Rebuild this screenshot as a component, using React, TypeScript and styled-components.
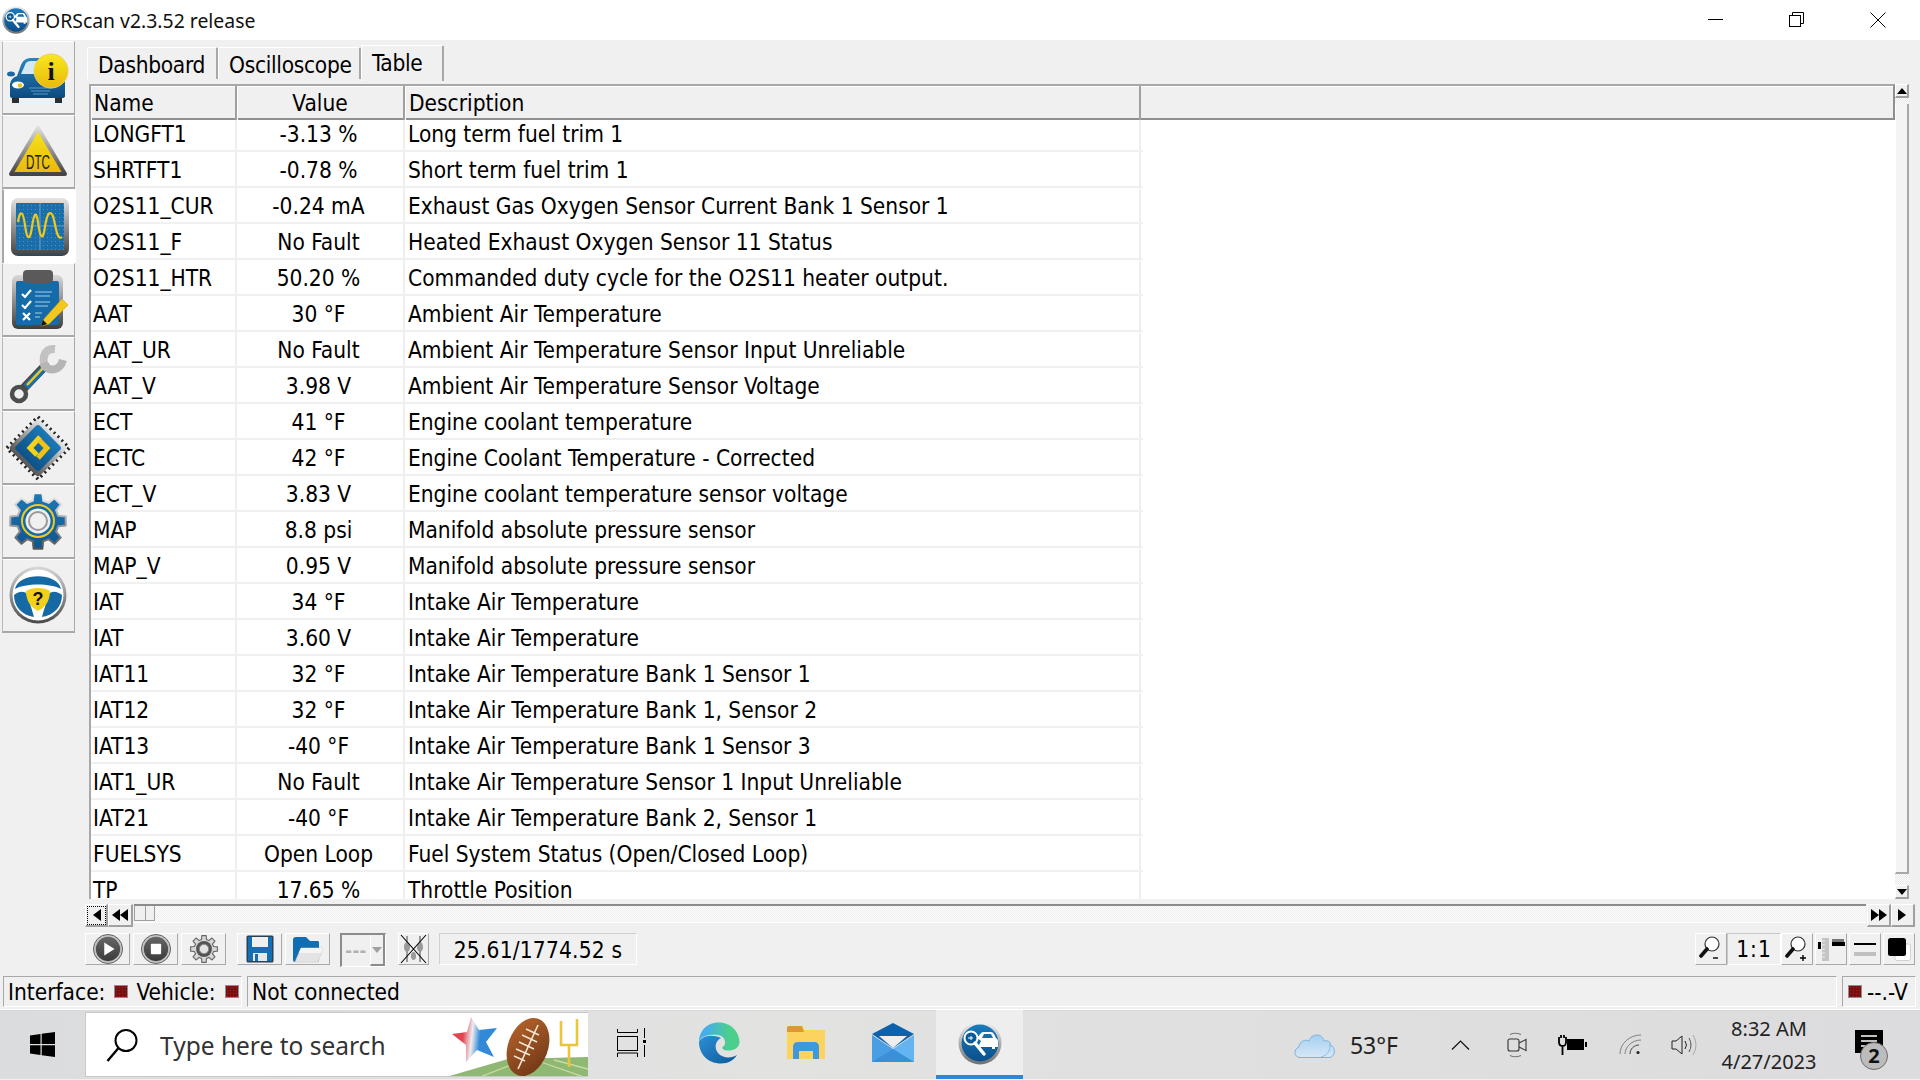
import React from 'react';
import styled, { createGlobalStyle } from 'styled-components';

const FONT = '"DejaVu Sans Condensed", "Noto Sans", "Liberation Sans", sans-serif';
const SYS = '"Noto Sans", "Open Sans", "Liberation Sans", sans-serif';

const Global = createGlobalStyle`
  html, body { margin: 0; padding: 0; background: #f0f0f0; }
  * { box-sizing: border-box; }
`;

const ROWS: [string, string, string][] = [
  ['LONGFT1', '-3.13 %', 'Long term fuel trim 1'],
  ['SHRTFT1', '-0.78 %', 'Short term fuel trim 1'],
  ['O2S11_CUR', '-0.24 mA', 'Exhaust Gas Oxygen Sensor Current Bank 1 Sensor 1'],
  ['O2S11_F', 'No Fault', 'Heated Exhaust Oxygen Sensor 11 Status'],
  ['O2S11_HTR', '50.20 %', 'Commanded duty cycle for the O2S11 heater output.'],
  ['AAT', '30 °F', 'Ambient Air Temperature'],
  ['AAT_UR', 'No Fault', 'Ambient Air Temperature Sensor Input Unreliable'],
  ['AAT_V', '3.98 V', 'Ambient Air Temperature Sensor Voltage'],
  ['ECT', '41 °F', 'Engine coolant temperature'],
  ['ECTC', '42 °F', 'Engine Coolant Temperature - Corrected'],
  ['ECT_V', '3.83 V', 'Engine coolant temperature sensor voltage'],
  ['MAP', '8.8 psi', 'Manifold absolute pressure sensor'],
  ['MAP_V', '0.95 V', 'Manifold absolute pressure sensor'],
  ['IAT', '34 °F', 'Intake Air Temperature'],
  ['IAT', '3.60 V', 'Intake Air Temperature'],
  ['IAT11', '32 °F', 'Intake Air Temperature Bank 1 Sensor 1'],
  ['IAT12', '32 °F', 'Intake Air Temperature Bank 1, Sensor 2'],
  ['IAT13', '-40 °F', 'Intake Air Temperature Bank 1 Sensor 3'],
  ['IAT1_UR', 'No Fault', 'Intake Air Temperature Sensor 1 Input Unreliable'],
  ['IAT21', '-40 °F', 'Intake Air Temperature Bank 2, Sensor 1'],
  ['FUELSYS', 'Open Loop', 'Fuel System Status (Open/Closed Loop)'],
  ['TP', '17.65 %', 'Throttle Position'],
];

const Page = styled.div`
  width: 1920px; height: 1080px; overflow: hidden; display: flex; flex-direction: column;
  font-family: ${FONT}; font-size: 22.5px; color: #000; background: #f0f0f0;
`;
const TitleBar = styled.header`
  height: 40px; background: #fff; display: flex; align-items: center; padding: 0 2px 0 2px; flex: none; font-family: ${SYS};
`;
const TitleText = styled.span`
  font-size: 19.4px; margin-left: 5px; color: #111; flex: 1;
`;
const WinButton = styled.div<{ $w: number }>`
  width: ${p => p.$w}px; height: 40px; display: flex; align-items: center; justify-content: center;
`;
const Workspace = styled.main`
  height: 970px; flex: none; display: flex; flex-direction: column; background: #f0f0f0;
`;
const Upper = styled.div`
  height: 930px; display: flex; flex: none;
`;
const Sidebar = styled.nav`
  width: 74px; margin-left: 2px; padding-top: 1px; flex: none; display: flex; flex-direction: column;
`;
const SideButton = styled.div<{ $active?: boolean }>`
  height: 74px; width: ${p => (p.$active ? 74 : 73)}px; background: ${p => (p.$active ? '#fff' : '#f0f0f0')};
  border-left: ${p => (p.$active ? '2px solid #a8a8a8' : '1px solid #b8b8b8')};
  border-right: ${p => (p.$active ? 'none' : '1px solid #a8a8a8')};
  border-bottom: ${p => (p.$active ? 'none' : '2px solid #a8a8a8')};
  border-top: 1px solid #fff;
  display: flex; align-items: flex-start; justify-content: flex-start;
  svg { display: block; flex: none; margin-left: -1px; margin-top: -1px; }
`;
const Content = styled.section`
  flex: 1; min-width: 0; display: flex; flex-direction: column; padding: 5px 5px 0 9px;
`;
const Tabs = styled.div`
  height: 39px; margin-left: 2px; display: flex; align-items: flex-start; flex: none;
`;
const Tab = styled.div<{ $active?: boolean; $w: number }>`
  width: ${p => p.$w}px; height: ${p => (p.$active ? 36 : 32)}px; margin-top: ${p => (p.$active ? 0 : 2)}px;
  border-top: 1px solid #fff; border-left: 1px solid #fff; border-right: 2px solid #a8a8a8;
  border-top-left-radius: 2px; border-top-right-radius: 2px; letter-spacing: -0.3px;
  padding-left: 10px; line-height: 35px; white-space: nowrap; background: #f0f0f0;
`;
const TableArea = styled.div`
  height: 815px; flex: none; display: flex; margin-left: 4px; padding-right: 6px;
`;
const Table = styled.div`
  flex: 1; min-width: 0; display: flex; flex-direction: column; background: #fff; border-left: 2px solid #a8a8a8; overflow: hidden;
`;
const HeaderRow = styled.div`
  height: 36px; flex: none; display: grid; grid-template-columns: 146px 168px 736px 1fr; position: relative; z-index: 1;
  background: #f0f0f0; border-top: 2px solid #a8a8a8; border-bottom: 2px solid #8f8f8f; border-right: 2px solid #8f8f8f;
`;
const HeaderCell = styled.div<{ $center?: boolean; $pad?: number }>`
  line-height: 34px; border-right: 2px solid #a0a0a0; box-shadow: inset 1px 1px 0 #fff; white-space: nowrap;
  text-align: ${p => (p.$center ? 'center' : 'left')}; padding-left: ${p => p.$pad ?? 0}px;
`;
const HeaderFill = styled.div`
  box-shadow: inset 0 1px 0 #fff;
`;
const Rows = styled.div`
  margin-top: -4px; width: 1052px;
`;
const Row = styled.div`
  height: 36px; display: grid; grid-template-columns: 146px 168px 736px; border-bottom: 2px solid #f0f0f0;
`;
const Cell = styled.div<{ $center?: boolean; $pad?: number }>`
  line-height: 36px; border-right: 2px solid #f0f0f0; white-space: nowrap; overflow: hidden; height: 34px;
  text-align: ${p => (p.$center ? 'center' : 'left')}; padding-left: ${p => p.$pad ?? 0}px;
  padding-right: ${p => (p.$center ? 3 : 0)}px;
`;
const VScroll = styled.div`
  width: 14px; flex: none; display: flex; flex-direction: column; background: repeating-conic-gradient(#fff 0 25%, #e6e6e6 0 50%) 0 0 / 2px 2px;
`;
const VThumb = styled.div`
  height: 770px; margin-top: 6px; flex: none; background: #f4f4f4; border-right: 2px solid #a8a8a8; border-bottom: 2px solid #a8a8a8; border-left: 1px solid #fff;
`;
const ArrowBtn = styled.div<{ $w: number; $h: number; $focus?: boolean }>`
  width: ${p => p.$w}px; height: ${p => p.$h}px; flex: none; display: flex; align-items: center; justify-content: center;
  background: #f0f0f0; border-top: 1px solid #fff; border-left: 1px solid #fff; border-right: 2px solid #a0a0a0; border-bottom: 2px solid #a0a0a0;
  position: relative;
  ${p => p.$focus ? 'outline: 1px dotted #000; outline-offset: -3px;' : ''}
`;
const SliderRow = styled.div`
  height: 23px; margin-top: 5px; flex: none; display: flex; align-items: flex-start;
`;
const Track = styled.div`
  flex: 1; min-width: 0; height: 19px; margin-left: 1px; margin-right: 1px; border-top: 2px solid #8c8c8c; border-bottom: 1px solid #fff;
  background: repeating-conic-gradient(#fff 0 25%, #ececec 0 50%) 0 0 / 2px 2px;
`;
const Thumb = styled.div`
  width: 21px; height: 15px; background: #f0f0f0; border: 1px solid #a0a0a0; border-top: none; display: flex;
  &::after { content: ''; width: 1px; height: 100%; background: #a0a0a0; margin-left: 10px; }
`;
const Toolbar = styled.div`
  height: 32px; margin-top: 6px; flex: none; display: flex; align-items: flex-start;
`;
const ToolButton = styled.div<{ $w?: number; $ml?: number }>`
  width: ${p => p.$w ?? 45}px; height: 32px; margin-left: ${p => p.$ml ?? 0}px; flex: none;
  display: flex; align-items: center; justify-content: center; background: #f0f0f0;
  border-top: 1px solid #fff; border-left: 1px solid #fff; border-right: 1px solid #a8a8a8; border-bottom: 1px solid #a8a8a8;
`;
const Combo = styled.div`
  width: 46px; height: 34px; margin-left: 10px; flex: none; display: flex; align-items: center;
  border-top: 2px solid #8c8c8c; border-left: 2px solid #8c8c8c; border-right: 1px solid #fff; border-bottom: 1px solid #fff;
`;
const ComboText = styled.div`
  flex: 1; text-align: center; color: #b0b0b0; font-size: 18px; font-weight: 700; line-height: 28px; letter-spacing: 0.5px;
`;
const ComboArrow = styled.div`
  width: 15px; height: 100%; display: flex; align-items: center; justify-content: center;
  border-left: 1px solid #fff; border-right: 2px solid #8c8c8c; border-bottom: 2px solid #8c8c8c;
`;
const Readout = styled.div`
  width: 198px; height: 32px; margin-left: 10px; flex: none; text-align: center; line-height: 32px; white-space: nowrap; letter-spacing: 0.2px;
  border: 1px solid #d0d0d0; border-right-color: #fff; border-bottom-color: #fff;
`;
const RatioBtn = styled.div`
  width: 54px; height: 32px; flex: none; text-align: center; line-height: 31px; letter-spacing: 1px;
  border-top: 1px solid #c8c8c8; border-left: 1px solid #c8c8c8; border-right: 1px solid #fff; border-bottom: 1px solid #fff;
`;
const Spacer = styled.div`
  flex: 1;
`;
const StatusBar = styled.footer`
  height: 31px; margin-top: 6px; padding: 0 4px 0 3px; flex: none; display: flex; gap: 5px;
`;
const StatusPanel = styled.div<{ $w?: number }>`
  ${p => (p.$w ? `width: ${p.$w}px; flex: none;` : 'flex: 1;')}
  display: flex; align-items: center; padding: 1px 0 0 4px; white-space: nowrap; line-height: 30px;
  border-top: 1px solid #a8a8a8; border-left: 1px solid #a8a8a8; border-right: 1px solid #fff; border-bottom: 1px solid #fff;
`;
const Led = styled.span<{ $first?: boolean }>`
  width: 14px; height: 13px; flex: none; margin: ${p => (p.$first ? '-1px 5px 0 1px' : '-1px 8px 0 9px')}; background: #7a0d0d; border: 1px solid #8f8f8f;
  background-image: radial-gradient(#a32222 0.6px, transparent 0.7px); background-size: 3px 3px;
`;
const Taskbar = styled.div`
  height: 70px; flex: none; display: flex; align-items: stretch; background: linear-gradient(90deg, #dbdcde, #e2e2e1 40%, #dcdcde);
  border-top: 1px solid #fff; margin-top: -1px; box-shadow: inset 0 1px 0 #d8d8d8; font-family: ${SYS};
`;
const StartButton = styled.div`
  width: 85px; flex: none; display: flex; align-items: center; justify-content: center; padding-right: 1px;
`;
const SearchBox = styled.div`
  width: 503px; flex: none; margin: 2px 0; background: #fff; display: flex; align-items: center; border: 1px solid #c8c8c8; border-right: none; overflow: hidden;
`;
const SearchIcon = styled.div`
  margin-left: 20px; flex: none; display: flex;
`;
const SearchText = styled.div`
  margin-left: 21px; padding-top: 2px; flex: 1; color: #333; font-size: 24.5px; white-space: nowrap;
`;
const TaskButton = styled.div<{ $active?: boolean }>`
  width: 87px; flex: none; display: flex; align-items: center; justify-content: center; padding-bottom: 4px;
  ${p => p.$active ? 'background: #eeeeee; border-bottom: 4px solid #2f86d1; padding-bottom: 0;' : ''}
`;
const Tray = styled.div`
  margin-left: auto; padding-right: 30px; display: flex; align-items: center;
`;
const TrayItem = styled.div<{ $w: number; $ml?: number }>`
  width: ${p => p.$w}px; margin-left: ${p => p.$ml ?? 0}px; flex: none; display: flex; align-items: center; justify-content: center; position: relative;
`;
const Temp = styled.div`
  font-size: 23px; color: #222; white-space: nowrap;
`;
const Clock = styled.div`
  font-size: 20px; line-height: 33px; text-align: center; color: #222; white-space: nowrap; padding-top: 1px;
`;
const Badge = styled.div`
  position: absolute; left: 12px; top: 12px; width: 28px; height: 28px; border-radius: 50%; background: #bcbcbc; border: 1px solid #6a6a6a;
  text-align: center; line-height: 26px; font-size: 20px; font-weight: 700; color: #111;
`;

const gear = (cx: number, cy: number, ro: number, ri: number, n: number) => {
  const pts: string[] = [];
  const s = (Math.PI * 2) / n;
  for (let i = 0; i < n; i++) {
    const a = i * s - Math.PI / 2;
    [[ri, -0.32], [ro, -0.2], [ro, 0.2], [ri, 0.32]].forEach(([r, o]) => {
      const t = a + o * s;
      pts.push(`${(cx + r * Math.cos(t)).toFixed(1)},${(cy + r * Math.sin(t)).toFixed(1)}`);
    });
  }
  return pts.join(' ');
};

const Logo = ({ size, id }: { size: number; id: string }) => (
  <svg width={size} height={size} viewBox="0 0 44 44">
    <defs>
      <linearGradient id={`${id}r`} x1="0" y1="0" x2="0" y2="1"><stop offset="0" stopColor="#f2f2f2" /><stop offset="1" stopColor="#707070" /></linearGradient>
      <linearGradient id={`${id}b`} x1="0" y1="0" x2="0" y2="1"><stop offset="0" stopColor="#1a7cbd" /><stop offset="1" stopColor="#0b4f8b" /></linearGradient>
    </defs>
    <circle cx="22" cy="22" r="21.5" fill={`url(#${id}r)`} />
    <circle cx="22" cy="22" r="18.5" fill={`url(#${id}b)`} />
    <path d="M19 17 L23 12 Q24 11 26 11 L33 11 Q35 11 36 13 L38 17 Q40 18 40 20 L40 26 L37 26 L37 28 L34 28 L34 26 L22 26 L21 24 L23 20 Z" fill="#fff" />
    <path d="M24 17 L26 13 L33 13 L35 17 Z" fill="#1a6ca8" />
    <circle cx="13" cy="17" r="6.5" fill="#0b5a98" stroke="#fff" strokeWidth="2" />
    <path d="M17 22 L26 33" stroke="#fff" strokeWidth="3.5" strokeLinecap="round" />
    <path d="M10 17 h5 M13 15 v4" stroke="#fff" strokeWidth="1" />
  </svg>
);

const CarInfo = () => (
  <svg width="73" height="73" viewBox="0 0 73 73">
    <defs>
      <linearGradient id="carb" x1="0" y1="0" x2="0" y2="1"><stop offset="0" stopColor="#2a83bf" /><stop offset="1" stopColor="#0c4a7e" /></linearGradient>
      <linearGradient id="infoy" x1="0" y1="0" x2="0" y2="1"><stop offset="0" stopColor="#f8e71f" /><stop offset="1" stopColor="#eab90d" /></linearGradient>
    </defs>
    <ellipse cx="9" cy="33" rx="4" ry="2.5" fill="#1a6aa5" />
    <path d="M8 43 Q9 37 15 35 L19 24 Q21 18 28 17 L48 17 Q55 18 57 24 L60 35 Q63 37 63 43 L63 55 Q63 57 60 57 L10 57 Q8 57 8 55 Z" fill="url(#carb)" />
    <path d="M19 33 L23 24 Q24 20 29 20 L48 20 L50 33 Z" fill="#d3e9f6" />
    <ellipse cx="16" cy="44" rx="6" ry="3.5" fill="#fff" />
    <circle cx="18" cy="44.5" r="2.2" fill="#e6c21a" />
    <path d="M27 47 H50 M29 50 H48 M31 53 H46" stroke="#5c9cc9" strokeWidth="1" />
    <rect x="10" y="57" width="7" height="5" fill="#2e2e2e" />
    <rect x="53" y="57" width="7" height="5" fill="#2e2e2e" />
    <circle cx="49" cy="30" r="17" fill="url(#infoy)" stroke="#e9cf62" strokeWidth="1" />
    <text x="49" y="39" textAnchor="middle" fontFamily='"Liberation Serif", serif' fontWeight="700" fontSize="26" fill="#111">i</text>
  </svg>
);

const Dtc = () => (
  <svg width="73" height="73" viewBox="0 0 73 73">
    <defs>
      <linearGradient id="dtcs" x1="0" y1="0" x2="0" y2="1"><stop offset="0" stopColor="#dcdcdc" /><stop offset="1" stopColor="#444" /></linearGradient>
      <linearGradient id="dtcy" x1="0" y1="0" x2="0" y2="1"><stop offset="0" stopColor="#f6e61c" /><stop offset="1" stopColor="#ebb70b" /></linearGradient>
    </defs>
    <path d="M36 13 L9 59 L63 59 Z" fill="url(#dtcy)" stroke="url(#dtcs)" strokeWidth="4" strokeLinejoin="round" />
    <text x="36" y="54" textAnchor="middle" textLength="24" lengthAdjust="spacingAndGlyphs" fontFamily='"Liberation Sans", sans-serif' fontSize="21" fill="#222">DTC</text>
  </svg>
);

const Scope = () => (
  <svg width="73" height="73" viewBox="0 0 73 73">
    <defs>
      <linearGradient id="scf" x1="0" y1="0" x2="0" y2="1"><stop offset="0" stopColor="#e4e4e4" /><stop offset="1" stopColor="#414141" /></linearGradient>
      <pattern id="scd" width="4" height="4" patternUnits="userSpaceOnUse"><rect width="1" height="1" fill="#4f92c2" /></pattern>
    </defs>
    <rect x="8" y="9" width="58" height="58" rx="7" fill="url(#scf)" />
    <rect x="13" y="14" width="48" height="47" fill="#1a6ea9" rx="1" />
    <rect x="13" y="14" width="48" height="47" fill="url(#scd)" />
    <path d="M37 14 V61 M13 37 H61" stroke="#5c9ac4" strokeWidth="1.2" />
    <path d="M15 33 C17 20 20 22 22 36 C24 52 27 52 29 38 C31 24 33 21 35 33 C37 50 40 52 42 38 C44 24 47 21 50 27 C53 38 54 52 59 48" fill="none" stroke="#f2c81b" strokeWidth="2.2" />
  </svg>
);

const Clipboard = () => (
  <svg width="73" height="73" viewBox="0 0 73 73">
    <defs>
      <linearGradient id="clf" x1="0" y1="0" x2="0" y2="1"><stop offset="0" stopColor="#d8d8d8" /><stop offset="1" stopColor="#3e3e3e" /></linearGradient>
    </defs>
    <rect x="10" y="12" width="51" height="54" rx="6" fill="url(#clf)" />
    <rect x="14" y="18" width="43" height="44" rx="2" fill="#156ba8" />
    <rect x="21" y="7" width="30" height="13" rx="4" fill="#5a5a5a" />
    <path d="M20 31 l3 3 l6 -7 M20 42 l3 3 l6 -7" stroke="#fff" strokeWidth="2.2" fill="none" />
    <path d="M21 50 l7 7 M28 50 l-7 7" stroke="#fff" strokeWidth="2.2" />
    <path d="M33 29 H50 M33 33 H48 M33 39 H48 M33 43 H46 M33 50 H40 M33 54 H38" stroke="#a9d0ea" strokeWidth="1.2" />
    <path d="M42 56 L60 36 L66 42 L47 61 L39 63 Z" fill="#f3c81c" stroke="#d8a60e" strokeWidth="0.6" />
    <path d="M39 63 L41 57 L45 61 Z" fill="#111" />
  </svg>
);

const Wrench = () => (
  <svg width="73" height="73" viewBox="0 0 73 73">
    <path d="M20 53 L43 29" stroke="#4a4a4a" strokeWidth="9" strokeLinecap="round" />
    <path d="M24 50 L43 30" stroke="#1a6fb0" strokeWidth="6.5" />
    <path d="M25 48 L42 30" stroke="#f2c81b" strokeWidth="2.5" />
    <circle cx="17" cy="57" r="7" fill="#f0f0f0" stroke="#4d4d4d" strokeWidth="4.5" />
    <path d="M53 12 C42 11 39 22 44 31" fill="none" stroke="#c2c2c2" strokeWidth="8" />
    <path d="M41 26 C46 36 58 34 61 23" fill="none" stroke="#b5b5b5" strokeWidth="8" />
  </svg>
);

const Chip = () => (
  <svg width="73" height="73" viewBox="0 0 73 73">
    <defs>
      <linearGradient id="chb" x1="0" y1="0" x2="0" y2="1"><stop offset="0" stopColor="#1b78b6" /><stop offset="1" stopColor="#0d5288" /></linearGradient>
      <linearGradient id="chg" x1="0" y1="0" x2="0" y2="1"><stop offset="0" stopColor="#e4e4e4" /><stop offset="1" stopColor="#555" /></linearGradient>
    </defs>
    <g transform="rotate(45 36 37)">
      <rect x="14" y="15" width="44" height="44" fill="none" stroke="#222" strokeWidth="3.5" strokeDasharray="2 3.5" />
      <rect x="15" y="16" width="42" height="42" rx="4" fill="url(#chg)" />
      <rect x="19" y="20" width="34" height="34" rx="3" fill="url(#chb)" />
    </g>
    <path d="M38 26 L28 37 L35 44" fill="none" stroke="#f6d21b" strokeWidth="5" />
    <path d="M37 29 L45 37 L36 47" fill="none" stroke="#f0c214" strokeWidth="5" />
  </svg>
);

const Gear = () => (
  <svg width="73" height="73" viewBox="0 0 73 73">
    <defs>
      <linearGradient id="geb" x1="0" y1="0" x2="0" y2="1"><stop offset="0" stopColor="#1c78b8" /><stop offset="1" stopColor="#0e5490" /></linearGradient>
      <linearGradient id="ges" x1="0" y1="0" x2="0" y2="1"><stop offset="0" stopColor="#f0f0f0" /><stop offset="1" stopColor="#555" /></linearGradient>
    </defs>
    <polygon points={gear(36, 36, 28, 21, 8)} fill="url(#geb)" stroke="url(#ges)" strokeWidth="2" strokeLinejoin="round" />
    <circle cx="36" cy="36" r="16" fill="#136aa8" stroke="#f0c91c" strokeWidth="2" />
    <circle cx="36" cy="36" r="12.5" fill="#eee" />
    <circle cx="36" cy="36" r="9" fill="#f0f0f0" stroke="#999" strokeWidth="2" />
  </svg>
);

const Wheel = () => (
  <svg width="73" height="73" viewBox="0 0 73 73">
    <defs>
      <linearGradient id="whs" x1="0" y1="0" x2="0" y2="1"><stop offset="0" stopColor="#d8d8d8" /><stop offset="1" stopColor="#4a4a4a" /></linearGradient>
    </defs>
    <circle cx="36" cy="36" r="28.5" fill="url(#whs)" />
    <circle cx="36" cy="36" r="25.5" fill="#fff" />
    <path d="M13 30 C16 13 56 13 59 30 C49 24 23 24 13 30 Z" fill="#156aa6" />
    <path d="M12 36 C20 30 26 33 27 40 C28 46 30 50 32 58 C20 56 12 48 12 36 Z" fill="#156aa6" />
    <path d="M60 36 C52 30 46 33 45 40 C44 46 42 50 40 58 C52 56 60 48 60 36 Z" fill="#156aa6" />
    <path d="M24 32 C30 28 42 28 48 32 C48 41 44 48 36 52 C28 48 24 41 24 32 Z" fill="#f3d11b" />
    <text x="36" y="46" textAnchor="middle" fontFamily='"Liberation Sans", sans-serif' fontWeight="700" fontSize="18" fill="#111">?</text>
  </svg>
);

const Tri = ({ dir, dbl }: { dir: 'l' | 'r' | 'u' | 'd'; dbl?: boolean }) => {
  const rot = { r: 0, l: 180, d: 90, u: -90 }[dir];
  return (
    <svg width={dbl ? 18 : 11} height={12} viewBox={dbl ? '0 0 18 12' : '0 0 11 12'} style={{ transform: `rotate(${rot}deg)` }}>
      <path d="M1 0 L9 6 L1 12 Z" fill="#000" />
      {dbl && <path d="M9 0 L17 6 L9 12 Z" fill="#000" />}
    </svg>
  );
};
const SmallTri = ({ up }: { up?: boolean }) => (
  <svg width="10" height="6" viewBox="0 0 10 6"><path d={up ? 'M0 6 L5 0 L10 6 Z' : 'M0 0 L5 6 L10 0 Z'} fill="#000" /></svg>
);

const Disc = ({ kind }: { kind: 'play' | 'stop' }) => (
  <svg width="30" height="30" viewBox="0 0 32 32">
    <defs><linearGradient id={`d${kind}`} x1="0" y1="0" x2="0" y2="1"><stop offset="0" stopColor="#666" /><stop offset="1" stopColor="#3a3a3a" /></linearGradient></defs>
    <circle cx="16" cy="16" r="15.5" fill="#c4c4c4" stroke="#5a5a5a" strokeWidth="1" />
    <circle cx="16" cy="16" r="13" fill={`url(#d${kind})`} />
    {kind === 'play' ? <path d="M12 9 L23 16 L12 23 Z" fill="#fff" /> : <rect x="10.5" y="10.5" width="11" height="11" rx="1" fill="#fff" />}
  </svg>
);
const SmallGear = () => (
  <svg width="30" height="30" viewBox="0 0 32 32">
    <polygon points={gear(16, 16, 14.5, 10.5, 8)} fill="#d8d8d8" stroke="#666" strokeWidth="1.2" strokeLinejoin="round" />
    <circle cx="16" cy="16" r="8.5" fill="#555" />
    <circle cx="16" cy="16" r="5" fill="#e4e4e4" stroke="#888" />
  </svg>
);
const Save = () => (
  <svg width="28" height="28" viewBox="0 0 28 28">
    <path d="M2 0.5 H26 Q27.5 0.5 27.5 2 V26 Q27.5 27.5 26 27.5 H2 Q0.5 27.5 0.5 26 V2 Q0.5 0.5 2 0.5 Z" fill="#2b3f55" />
    <rect x="2" y="2" width="24" height="24" fill="#136eb2" />
    <rect x="6" y="2" width="16" height="10" fill="#efefef" />
    <rect x="7" y="18" width="14" height="8" fill="#e8e8e8" />
    <rect x="9" y="19" width="3" height="7" fill="#136eb2" />
  </svg>
);
const OpenFolder = () => (
  <svg width="32" height="27" viewBox="0 0 32 27">
    <path d="M1 4 Q1 1 4 1 H14 L18 5 H26 Q27 5 27 7 V24 Q27 26 25 26 H3 Q1 26 1 24 Z" fill="#116cb2" />
    <path d="M9 12 H31 L26 26 H3 Z" fill="#e4e4e4" stroke="#c9c9c9" strokeWidth="0.6" />
    <path d="M9 12 H31 L29 17 H7 Z" fill="#f4f4f4" />
  </svg>
);
const Forks = () => (
  <svg width="27" height="30" viewBox="0 0 27 30">
    <path d="M7 2 V28 M20 2 V28" stroke="#9a9a9a" strokeWidth="2" />
    <ellipse cx="7" cy="13" rx="3" ry="5" fill="#9a9a9a" /><ellipse cx="20" cy="13" rx="3" ry="5" fill="#9a9a9a" />
    <ellipse cx="13.5" cy="22" rx="2.5" ry="4" fill="#9a9a9a" />
    <path d="M1 1 L26 29 M26 1 L1 29" stroke="#000" strokeWidth="1.1" />
  </svg>
);
const Mag = ({ sign }: { sign: string }) => (
  <svg width="24" height="26" viewBox="0 0 24 26">
    <circle cx="13" cy="8" r="7" fill="#fff" stroke="#333" strokeWidth="1.2" />
    <path d="M8 13 L2 20" stroke="#111" strokeWidth="3.6" strokeLinecap="round" />
    {sign === '-' ? <path d="M14 22 H19" stroke="#000" strokeWidth="1.4" /> : <path d="M15 22 H21 M18 19 V25" stroke="#000" strokeWidth="1.4" />}
  </svg>
);
const Ruler = () => (
  <svg width="27" height="23" viewBox="0 0 27 23">
    <rect x="0" y="4" width="3" height="7" fill="#000" />
    <rect x="4" y="0" width="7" height="23" fill="#c4c4c4" />
    <path d="M4 3 H7 M4 7 H7 M4 11 H7 M4 15 H7 M4 19 H7" stroke="#f0f0f0" />
    <rect x="14" y="4" width="13" height="4" fill="#000" />
    <path d="M15 1 V5 M17 1 V5 M19 1 V5 M21 1 V5 M23 1 V5 M25 1 V5" stroke="#000" />
  </svg>
);
const LineTool = () => (
  <svg width="22" height="13" viewBox="0 0 22 13">
    <rect x="0" y="0" width="22" height="2" fill="#000" />
    <rect x="0" y="9" width="22" height="4" fill="#c0c0c0" />
  </svg>
);
const SquareTool = () => (
  <svg width="23" height="23" viewBox="0 0 23 23">
    <rect x="7" y="6" width="15.5" height="16.5" rx="2" fill="#fff" stroke="#d0d0d0" />
    <rect x="0" y="0" width="18" height="18" rx="2.5" fill="#000" />
  </svg>
);
const WinLogo = () => (
  <svg width="25" height="25" viewBox="0 0 25 25">
    <path d="M0 3.4 L10.5 2 V12 H0 Z M11.7 1.8 L25 0 V12 H11.7 Z M0 13.2 H10.5 V23 L0 21.6 Z M11.7 13.2 H25 V25 L11.7 23.2 Z" fill="#000" />
  </svg>
);
const SearchGlass = () => (
  <svg width="33" height="34" viewBox="0 0 33 34">
    <circle cx="20" cy="12.5" r="10.5" fill="none" stroke="#000" strokeWidth="2" />
    <path d="M12.5 20 L1.5 33" stroke="#000" strokeWidth="2.4" />
  </svg>
);
const SearchArt = () => (
  <svg width="142" height="64" viewBox="0 0 142 64" style={{ flex: 'none', display: 'block' }}>
    <defs>
      <linearGradient id="balld" x1="0" y1="0" x2="1" y2="1"><stop offset="0" stopColor="#b9662c" /><stop offset="1" stopColor="#6b3315" /></linearGradient>
      <linearGradient id="starw" x1="0" y1="0" x2="1" y2="0.1"><stop offset="0.28" stopColor="#e04550" /><stop offset="0.48" stopColor="#eeeef0" /><stop offset="0.66" stopColor="#3289d8" /></linearGradient>
    </defs>
    <polygon points="0,64 62,46 142,44 142,64" fill="#8fb873" />
    <path d="M34 64 L70 50 M92 48 L138 64 M108 47 L142 56" stroke="#c8dca8" strokeWidth="1.3" />
    <polygon points="25,4 33,17 51,15 40,29 48,44 31,37 20,49 20,32 6,21 21,19" fill="url(#starw)" />
    <ellipse cx="82" cy="34" rx="20" ry="30" transform="rotate(20 82 34)" fill="url(#balld)" />
    <path d="M72 56 L92 12" stroke="#f3e7d6" strokeWidth="1.6" />
    <path d="M76 22 L91 29 M73 29 L88 36 M70 36 L84 42 M80 16 L93 22 M68 43 L79 48" stroke="#f3e7d6" strokeWidth="1.4" />
    <path d="M115 8 V32 H131 V6 M123 32 V54" fill="none" stroke="#e9c53a" strokeWidth="2.6" />
  </svg>
);
const TaskView = () => (
  <svg width="30" height="30" viewBox="0 0 30 30" fill="none" stroke="#000" strokeWidth="1">
    <path d="M0.5 1 V4.5 H20.5 V1 M0.5 29 V25 H20.5 V29" />
    <rect x="0.5" y="8.5" width="20" height="14" />
    <path d="M27.5 0 V10 M27.5 17 V29" />
    <rect x="26" y="12" width="3" height="3" fill="#000" stroke="none" />
  </svg>
);
const Edge = () => (
  <svg width="42" height="42" viewBox="0 0 42 42">
    <defs>
      <linearGradient id="edt" x1="0" y1="0" x2="1" y2="0"><stop offset="0.2" stopColor="#46aee8" /><stop offset="0.75" stopColor="#4bd08c" /></linearGradient>
      <linearGradient id="edb" x1="0" y1="0" x2="1" y2="1"><stop offset="0" stopColor="#2f8fd6" /><stop offset="1" stopColor="#0c5a98" /></linearGradient>
    </defs>
    <path d="M1 20 C1 8 10 0.5 21 0.5 C33 0.5 41.5 10 41.5 20 C41.5 26 36 28.5 30 28.5 C26 28.5 24 27 24.5 25 C29 23 28 14 20 13 C10 12 3 14 1 20 Z" fill="url(#edt)" />
    <path d="M1 20 C1 33 11 41.5 23 41.5 C30 41.5 36 38 39 33 C33 37 24 36 20 31 C16 26 17 19 23 16 C15 12 4 13 1 20 Z" fill="url(#edb)" />
  </svg>
);
const Explorer = () => (
  <svg width="38" height="33" viewBox="0 0 38 33">
    <path d="M0 2 Q0 0 2 0 H15 L18 4 H38 V33 H0 Z" fill="#fbd35e" />
    <path d="M0 2 Q0 0 2 0 H15 L17 6 H0 Z" fill="#dd9930" />
    <path d="M6 33 V21 Q6 16 11 16 H27 Q32 16 32 21 V33 H26 V25 H12 V33 Z" fill="#3f97e2" />
  </svg>
);
const Mail = () => (
  <svg width="42" height="39" viewBox="0 0 42 39">
    <path d="M0 11 L21 0 L42 11 L21 25 Z" fill="#0d62ad" />
    <path d="M7 13 H35 L21 25 Z" fill="#eeeeee" />
    <path d="M0 12 L21 26 V39 H0 Z" fill="#4a9fe4" />
    <path d="M42 12 L21 26 V39 H42 Z" fill="#63b4f0" />
    <path d="M0 39 L21 26 L42 39 Z" fill="#3a8fd9" />
  </svg>
);
const Cloud = () => (
  <svg width="43" height="27" viewBox="0 0 43 27">
    <defs><linearGradient id="cl" x1="0" y1="0" x2="0" y2="1"><stop offset="0" stopColor="#a6cff0" /><stop offset="1" stopColor="#d6e8f7" /></linearGradient></defs>
    <path d="M7 26.5 C1 26.5 0 18 6 16 C6 10 13 8 16 10 C18 2 30 2 31 10 C35 9 38 11 37 14 C43 15 43 26.5 36 26.5 Z" fill="url(#cl)" stroke="#7fb4de" strokeWidth="1" />
    <path d="M28 26 C36 24 37 18 37 14" fill="none" stroke="#8cbde3" />
  </svg>
);
const Chevron = () => (
  <svg width="19" height="10" viewBox="0 0 19 10"><path d="M1 9.5 L9.5 1 L18 9.5" fill="none" stroke="#111" strokeWidth="1.2" /></svg>
);
const Camera = () => (
  <svg width="20" height="26" viewBox="0 0 20 26" fill="none" stroke="#333" strokeWidth="1.1">
    <rect x="1" y="7" width="11" height="12" rx="2" />
    <path d="M12 11 L19 7.5 V18.5 L12 15" />
    <path d="M3 2.5 Q8 0 14 2.5 M3 23.5 Q8 26 14 23.5" stroke="#777" />
  </svg>
);
const Battery = () => (
  <svg width="29" height="20" viewBox="0 0 29 20">
    <path d="M1 2 V7 Q1 11 4.5 11 Q8 11 8 7 V2 M3 0 V3 M6 0 V3 M4.5 11 V20" fill="none" stroke="#000" strokeWidth="1.8" />
    <rect x="9" y="4" width="17" height="11" fill="#000" />
    <rect x="27" y="7" width="2" height="5" fill="#000" />
  </svg>
);
const Wifi = () => (
  <svg width="23" height="21" viewBox="0 0 23 21" fill="none" stroke="#808080">
    <path d="M1 20 C1 10 10 1 22 1" />
    <path d="M6 20 C6 13 13 6 22 6" />
    <path d="M11 20 C11 15 15 11 20 11" stroke="#444" />
    <circle cx="19" cy="18.5" r="1.6" fill="#222" stroke="none" />
  </svg>
);
const Volume = () => (
  <svg width="27" height="22" viewBox="0 0 27 22" fill="none" stroke="#222" strokeWidth="1">
    <path d="M1 7 H5 L11 2 V20 L5 15 H1 Z" />
    <path d="M14 7 Q17 11 14 15" />
    <path d="M18 4 Q22 11 18 18" stroke="#555" />
    <path d="M22 1 Q28 11 22 21" stroke="#aaa" />
  </svg>
);
const Bubble = () => (
  <svg width="28" height="30" viewBox="0 0 28 30">
    <path d="M0 0 H28 V23 H14 L8 29 V23 H0 Z" fill="#000" />
    <path d="M6 6 H22 M6 11 H22 M6 16 H16" stroke="#fff" strokeWidth="1.3" />
  </svg>
);

const Icons = [CarInfo, Dtc, Scope, Clipboard, Wrench, Chip, Gear, Wheel];

export default function App() {
  return (
    <Page>
      <Global />
      <TitleBar>
        <Logo size={28} id="tl" />
        <TitleText>FORScan v2.3.52 release</TitleText>
        <WinButton $w={81}>
          <svg width="16" height="2" viewBox="0 0 16 2"><rect width="15" height="1" fill="#000" /></svg>
        </WinButton>
        <WinButton $w={81}>
          <svg width="16" height="16" viewBox="0 0 16 16" fill="none" stroke="#000"><rect x="0.5" y="3.5" width="11" height="11" /><path d="M3.5 3.5 V0.5 H14.5 V11.5 H11.5" /></svg>
        </WinButton>
        <WinButton $w={81}>
          <svg width="16" height="16" viewBox="0 0 16 16"><path d="M0.5 0.5 L15.5 15.5 M15.5 0.5 L0.5 15.5" stroke="#000" /></svg>
        </WinButton>
      </TitleBar>
      <Workspace>
        <Upper>
          <Sidebar>
            {Icons.map((I, i) => (
              <SideButton key={i} $active={i === 2}><I /></SideButton>
            ))}
          </Sidebar>
          <Content>
            <Tabs>
              <Tab $w={131}>Dashboard</Tab>
              <Tab $w={143}>Oscilloscope</Tab>
              <Tab $w={83} $active>Table</Tab>
            </Tabs>
            <TableArea>
              <Table>
                <HeaderRow>
                  <HeaderCell $pad={3}>Name</HeaderCell>
                  <HeaderCell $center>Value</HeaderCell>
                  <HeaderCell $pad={4}>Description</HeaderCell>
                  <HeaderFill />
                </HeaderRow>
                <Rows>
                  {ROWS.map((r, i) => (
                    <Row key={i}>
                      <Cell $pad={2}>{r[0]}</Cell>
                      <Cell $center>{r[1]}</Cell>
                      <Cell $pad={3}>{r[2]}</Cell>
                    </Row>
                  ))}
                </Rows>
              </Table>
              <VScroll>
                <ArrowBtn $w={14} $h={14}><SmallTri up /></ArrowBtn>
                <VThumb />
                <Spacer />
                <ArrowBtn $w={14} $h={14}><SmallTri /></ArrowBtn>
              </VScroll>
            </TableArea>
            <SliderRow>
              <ArrowBtn $w={23} $h={23} $focus><Tri dir="l" /></ArrowBtn>
              <ArrowBtn $w={25} $h={23}><Tri dir="l" dbl /></ArrowBtn>
              <Track><Thumb /></Track>
              <ArrowBtn $w={24} $h={23}><Tri dir="r" dbl /></ArrowBtn>
              <ArrowBtn $w={24} $h={23}><Tri dir="r" /></ArrowBtn>
            </SliderRow>
            <Toolbar>
              <ToolButton><Disc kind="play" /></ToolButton>
              <ToolButton $ml={3}><Disc kind="stop" /></ToolButton>
              <ToolButton $ml={3}><SmallGear /></ToolButton>
              <ToolButton $ml={11}><Save /></ToolButton>
              <ToolButton $ml={3}><OpenFolder /></ToolButton>
              <Combo>
                <ComboText>---</ComboText>
                <ComboArrow><svg width="10" height="6" viewBox="0 0 10 6"><path d="M0 0 L5 6 L10 0 Z" fill="#a0a0a0" /></svg></ComboArrow>
              </Combo>
              <ToolButton $w={31} $ml={12}><Forks /></ToolButton>
              <Readout>25.61/1774.52 s</Readout>
              <Spacer />
              <ToolButton $w={32}><Mag sign="-" /></ToolButton>
              <RatioBtn>1:1</RatioBtn>
              <ToolButton $w={32}><Mag sign="+" /></ToolButton>
              <ToolButton $w={32} $ml={2}><Ruler /></ToolButton>
              <ToolButton $w={32} $ml={2}><LineTool /></ToolButton>
              <ToolButton $w={32} $ml={2}><SquareTool /></ToolButton>
            </Toolbar>
          </Content>
        </Upper>
        <StatusBar>
          <StatusPanel $w={239}>Interface:<Led />Vehicle:<Led /></StatusPanel>
          <StatusPanel>Not connected</StatusPanel>
          <StatusPanel $w={74}><Led $first />--.-V</StatusPanel>
        </StatusBar>
      </Workspace>
      <Taskbar>
        <StartButton><WinLogo /></StartButton>
        <SearchBox>
          <SearchIcon><SearchGlass /></SearchIcon>
          <SearchText>Type here to search</SearchText>
          <SearchArt />
        </SearchBox>
        <TaskButton><TaskView /></TaskButton>
        <TaskButton><Edge /></TaskButton>
        <TaskButton><Explorer /></TaskButton>
        <TaskButton><Mail /></TaskButton>
        <TaskButton $active><Logo size={44} id="tb" /></TaskButton>
        <Tray>
          <TrayItem $w={58}><Cloud /></TrayItem>
          <TrayItem $w={62}><Temp>53°F</Temp></TrayItem>
          <TrayItem $w={36} $ml={37}><Chevron /></TrayItem>
          <TrayItem $w={40} $ml={19}><Camera /></TrayItem>
          <TrayItem $w={40} $ml={15}><Battery /></TrayItem>
          <TrayItem $w={40} $ml={18}><Wifi /></TrayItem>
          <TrayItem $w={40} $ml={14}><Volume /></TrayItem>
          <TrayItem $w={110} $ml={10}><Clock>8:32 AM<br />4/27/2023</Clock></TrayItem>
          <TrayItem $w={42} $ml={24}><Bubble /><Badge>2</Badge></TrayItem>
        </Tray>
      </Taskbar>
    </Page>
  );
}
